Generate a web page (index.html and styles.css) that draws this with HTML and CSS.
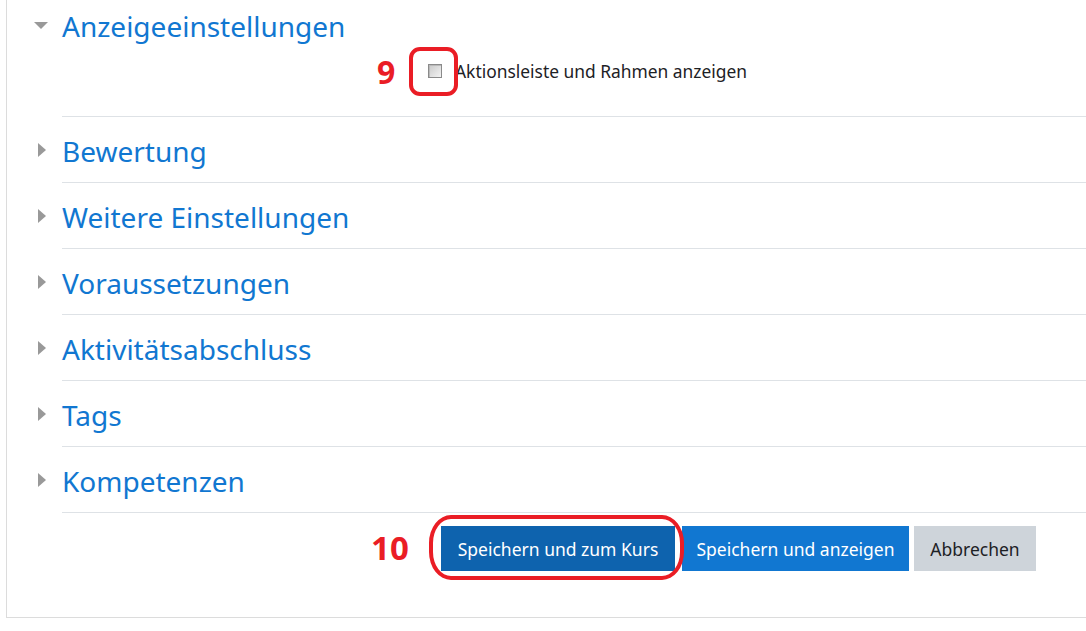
FILE: index.html
```html
<!DOCTYPE html>
<html lang="de">
<head>
<meta charset="utf-8">
<title>Einstellungen</title>
<link rel="stylesheet" href="styles.css">
</head>
<body>
<div class="panel">
  <section class="fs fs-open">
    <span class="toggle toggle-down"></span>
    <div class="fs-body">
      <h3 class="fs-title">Anzeigeeinstellungen</h3>
      <div class="check-row">
        <span class="checkbox"></span>
        <span class="check-label">Aktionsleiste und Rahmen anzeigen</span>
        <span class="mark mark-9">9</span>
        <span class="ring ring-9"></span>
      </div>
    </div>
  </section>
  <section class="fs">
    <span class="toggle toggle-right"></span>
    <div class="fs-body"><h3 class="fs-title">Bewertung</h3></div>
  </section>
  <section class="fs">
    <span class="toggle toggle-right"></span>
    <div class="fs-body"><h3 class="fs-title">Weitere Einstellungen</h3></div>
  </section>
  <section class="fs">
    <span class="toggle toggle-right"></span>
    <div class="fs-body"><h3 class="fs-title">Voraussetzungen</h3></div>
  </section>
  <section class="fs">
    <span class="toggle toggle-right"></span>
    <div class="fs-body"><h3 class="fs-title">Aktivitätsabschluss</h3></div>
  </section>
  <section class="fs">
    <span class="toggle toggle-right"></span>
    <div class="fs-body"><h3 class="fs-title">Tags</h3></div>
  </section>
  <section class="fs">
    <span class="toggle toggle-right"></span>
    <div class="fs-body"><h3 class="fs-title">Kompetenzen</h3></div>
  </section>
  <div class="actions">
    <div class="btn-wrap">
      <span class="mark mark-10">10</span>
      <button class="btn btn-primary btn-active">Speichern und zum Kurs</button>
      <span class="ring ring-10"></span>
    </div>
    <button class="btn btn-primary btn-view">Speichern und anzeigen</button>
    <button class="btn btn-secondary">Abbrechen</button>
  </div>
</div>
</body>
</html>
```

FILE: styles.css
```css
html, body {
  margin: 0;
  padding: 0;
  background: #ffffff;
}

body {
  font-family: "Noto Sans", "Open Sans", sans-serif;
  color: #1d2125;
  overflow: hidden;
}

.panel {
  margin-left: 6px;
  height: 618px;
  box-sizing: border-box;
  border-left: 1px solid #dcdcdc;
  border-bottom: 1px solid #dcdcdc;
  padding-left: 27px;
}

/* collapsible form sections */
.fs {
  display: grid;
  grid-template-columns: 28px 1fr;
}

.fs-body {
  padding: 16px 0 13px;
  border-bottom: 1px solid #dee2e6;
}

.fs-open .fs-body {
  padding: 8px 0 33px;
}

.fs-title {
  margin: 0;
  font-weight: 400;
  font-size: 28px;
  line-height: 36px;
  color: #1177d1;
}

.toggle {
  width: 0;
  height: 0;
  display: block;
}

.toggle-down {
  margin-top: 22px;
  border-left: 7px solid transparent;
  border-right: 7px solid transparent;
  border-top: 7px solid #999999;
}

.toggle-right {
  margin-top: 26px;
  margin-left: 4px;
  border-top: 7px solid transparent;
  border-bottom: 7px solid transparent;
  border-left: 8px solid #999999;
}

/* checkbox line */
.check-row {
  position: relative;
  display: flex;
  align-items: center;
  margin-top: 15px;
  margin-left: 366px;
  height: 24px;
}

.checkbox {
  width: 12px;
  height: 12px;
  border: 1px solid #8a8a8a;
  background: linear-gradient(135deg, #c9c9c9 0%, #e2e2e2 60%, #f2f2f2 100%);
  box-shadow: inset 1px 1px 0 #b9b9b9;
  flex: none;
}

.check-label {
  margin-left: 13px;
  font-size: 17.4px;
  color: #1d2125;
}

/* red call-outs */
.mark {
  position: absolute;
  color: #ea1d25;
  font-family: "Noto Sans", "Open Sans", sans-serif;
  font-weight: 700;
  font-style: normal;
  line-height: 1;
}

.ring {
  position: absolute;
  border: 4px solid #ea1d25;
  box-sizing: border-box;
  pointer-events: none;
}

.mark-9 {
  left: -51px;
  top: -3px;
  font-size: 32px;
}

.ring-9 {
  left: -19px;
  top: -12px;
  width: 49px;
  height: 49px;
  border-radius: 11px;
}

/* form buttons */
.actions {
  display: flex;
  align-items: center;
  margin-left: 407px;
  margin-top: 13px;
}

.btn-wrap {
  position: relative;
  display: flex;
}

.btn {
  font-family: "Noto Sans", "Open Sans", sans-serif;
  font-size: 17.5px;
  height: 45px;
  padding: 0;
  border: none;
  border-radius: 0;
  cursor: pointer;
  text-align: center;
}

.btn-primary {
  background: #1177d1;
  color: #ffffff;
}

.btn-active {
  background: #0e63ae;
  margin-right: 7px;
  width: 234px;
}

.btn-view {
  width: 227px;
  margin-right: 5px;
}

.btn-secondary {
  background: #ced4da;
  color: #1d2125;
  width: 122px;
}

.mark-10 {
  left: -70px;
  top: 5px;
  font-size: 33px;
}

.ring-10 {
  left: -12px;
  top: -11px;
  width: 255px;
  height: 65px;
  border-radius: 22px / 28px;
}
```
